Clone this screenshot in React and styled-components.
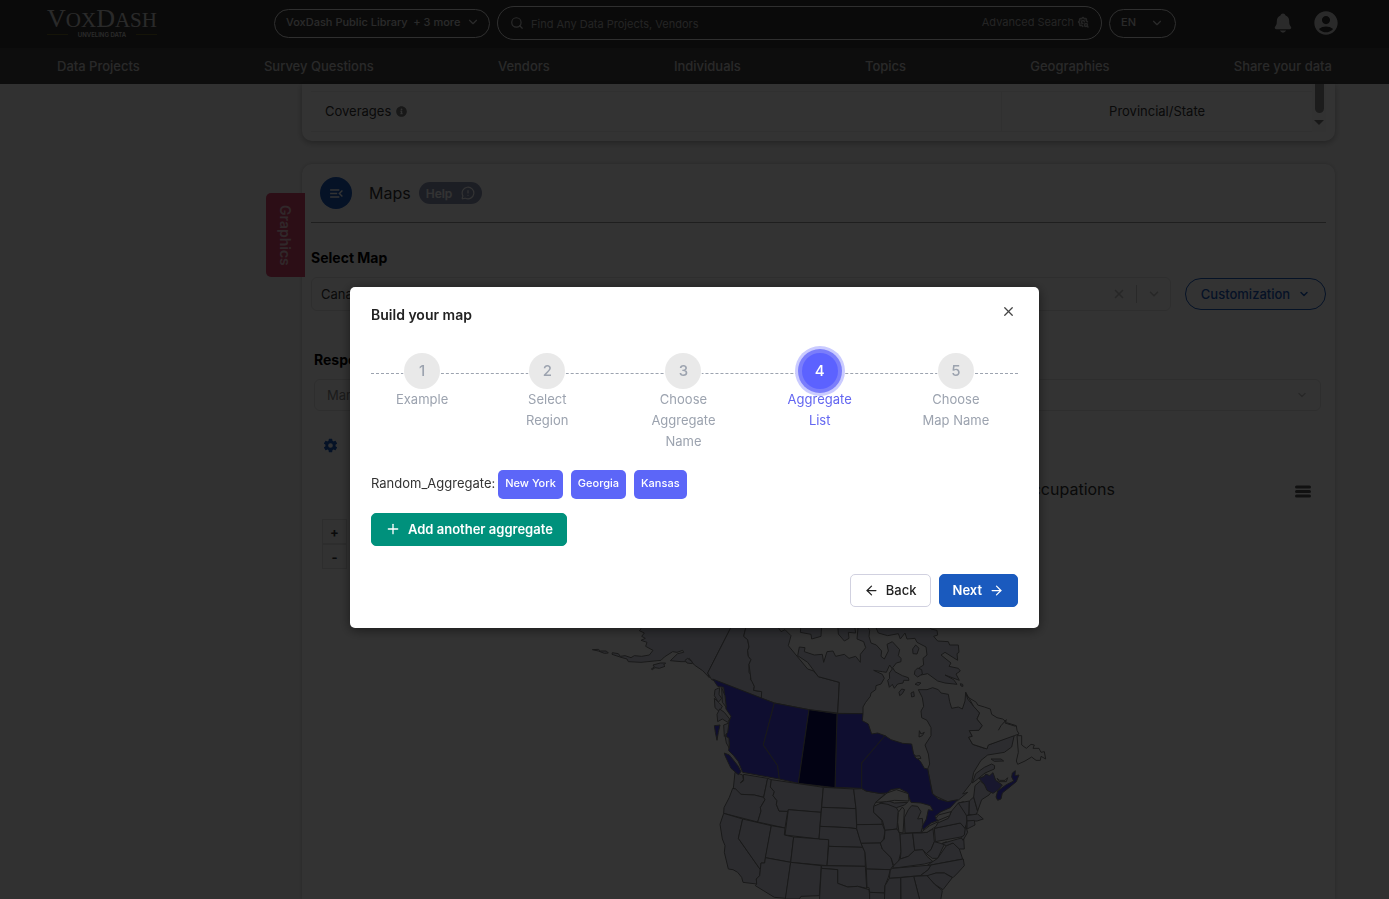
import styled, { createGlobalStyle } from "styled-components";
import { IoNotifications, IoSettingsSharp } from "react-icons/io5";
import { MdAccountCircle, MdMenuOpen } from "react-icons/md";
import { TbSettingsSearch } from "react-icons/tb";
import { FaInfoCircle } from "react-icons/fa";
import {
  ArrowLeft,
  ArrowRight,
  ChevronDown,
  MessageCircleWarning,
  Plus,
  Search,
  X,
} from "lucide-react";

const GlobalStyle = createGlobalStyle`
  * {
    box-sizing: border-box;
  }
  body {
    margin: 0;
    font-family: "Inter", "Liberation Sans", sans-serif;
    font-size: 13px;
    color: #333333;
  }
  h1, h2, h3, p, ol {
    margin: 0;
    padding: 0;
  }
  button, input, select {
    font: inherit;
    color: inherit;
  }
  button {
    cursor: pointer;
  }
`;

const Page = styled.div`
  height: 100vh;
  overflow: hidden;
  display: flex;
  flex-direction: column;
  background: #f5f5f5;
`;

const TopBar = styled.header`
  height: 48px;
  flex-shrink: 0;
  display: flex;
  align-items: center;
  padding: 0 49px 2px 47px;
  background: #323232;
  color: #d2d2d2;
`;

const Logo = styled.a`
  width: 110px;
  margin-right: 117px;
  text-align: center;
  text-decoration: none;
  color: #d2d2d2;
  .name {
    display: block;
    font-family: "Liberation Serif", serif;
    font-size: 21px;
    line-height: 21px;
    white-space: nowrap;
  }
  .name b {
    font-weight: 400;
    font-size: 26px;
  }
  .tagline {
    display: flex;
    align-items: center;
    justify-content: space-between;
    font-size: 6px;
    line-height: 8px;
    font-weight: 600;
    white-space: nowrap;
  }
  .tagline::before,
  .tagline::after {
    content: "";
    width: 21px;
    height: 1px;
    background: #6b6428;
  }
`;

const Pill = styled.button`
  width: 216px;
  height: 29px;
  display: flex;
  align-items: center;
  justify-content: space-between;
  padding: 0 9px 2px 11px;
  border: 1px solid #ebebeb;
  border-radius: 15px;
  background: none;
  font-size: 11px;
  font-weight: 500;
`;

const SearchBox = styled.div`
  flex: 1;
  height: 34px;
  margin: 0 7px;
  display: flex;
  align-items: center;
  gap: 7px;
  padding: 0 12px;
  border: 1px solid #ebebeb;
  border-radius: 17px;
  input {
    flex: 1;
    min-width: 0;
    border: 0;
    padding: 2px 0 0;
    background: none;
    font-size: 11px;
    outline: none;
  }
  input::placeholder {
    color: #b4b4b4;
  }
  a {
    display: flex;
    align-items: center;
    gap: 3px;
    font-size: 11px;
    color: #b4b4b4;
    text-decoration: none;
    padding-bottom: 3px;
  }
  a svg {
    stroke-width: 3;
  }
`;

const Language = styled.label`
  width: 67px;
  height: 29px;
  display: flex;
  align-items: center;
  padding: 0 11px;
  border: 1px solid #ebebeb;
  border-radius: 15px;
  font-size: 11px;
  font-weight: 500;
  select {
    appearance: none;
    flex: 1;
    min-width: 0;
    border: 0;
    padding: 0 0 2px;
    background: none;
  }
`;

const Account = styled.div`
  margin-left: 96px;
  display: flex;
  align-items: center;
  gap: 18px;
  button {
    display: flex;
    padding: 0;
    border: 0;
    background: none;
    color: #d2d2d2;
  }
`;

const Nav = styled.nav`
  height: 36px;
  flex-shrink: 0;
  display: flex;
  align-items: center;
  justify-content: space-between;
  padding: 0 57px;
  background: #414141;
  a {
    font-weight: 500;
    color: #cdcdcd;
    text-decoration: none;
  }
`;

const Content = styled.main`
  flex: 1;
  min-height: 0;
  display: flex;
  flex-direction: column;
  padding: 0 54px 0 266px;
`;

const CoverageCard = styled.section`
  display: flex;
  flex-shrink: 0;
  margin: 0 0 23px 36px;
  padding: 0 9px 9px;
  background: #ffffff;
  border-radius: 0 0 10px 10px;
  box-shadow: 0 2px 6px rgba(0, 0, 0, 0.3);
`;

const CoverageTable = styled.table`
  flex: 1;
  margin-top: 7px;
  border-collapse: collapse;
  th,
  td {
    height: 40px;
    padding: 0 0 2px;
    font-weight: 400;
    border-top: 1px solid #f0f0f0;
    border-bottom: 1px solid #f0f0f0;
  }
  th {
    width: 69%;
    padding-left: 14px;
    text-align: left;
  }
  th svg {
    margin-left: 1px;
    vertical-align: -1px;
    color: #777777;
  }
  td {
    border-left: 1px solid #f0f0f0;
    text-align: center;
  }
`;

const ScrollBar = styled.div`
  width: 14px;
  display: flex;
  flex-direction: column;
  align-items: center;
  gap: 7px;
  background: #fafafa;
  &::before {
    content: "";
    width: 9px;
    height: 29px;
    border-radius: 0 0 5px 5px;
    background: #8b8b8b;
  }
  &::after {
    content: "";
    border: 5px solid transparent;
    border-top-color: #777777;
    border-bottom: 0;
  }
`;

const MapArea = styled.div`
  flex: 1;
  display: flex;
  align-items: flex-start;
`;

const GraphicsTab = styled.button`
  width: 39px;
  height: 84px;
  margin: 29px -3px 0 0;
  padding: 0;
  position: relative;
  border: 0;
  border-radius: 5px 0 0 5px;
  background: #dc4670;
  color: #f0c8d2;
  font-size: 14px;
  font-weight: 600;
  writing-mode: vertical-rl;
`;

const MapCard = styled.section`
  flex: 1;
  min-width: 0;
  align-self: stretch;
  padding: 13px 9px 0;
  background: #ffffff;
  border-radius: 10px 10px 0 0;
  box-shadow: 0 0 4px rgba(0, 0, 0, 0.2);
`;

const MapHeader = styled.div`
  height: 46px;
  display: flex;
  align-items: flex-start;
  margin-bottom: 25px;
  padding-left: 9px;
  border-bottom: 1px solid #999999;
  h2 {
    margin: 0 8px 0 17px;
    font-size: 16px;
    line-height: 32px;
    font-weight: 400;
  }
`;

const MenuButton = styled.button`
  width: 32px;
  height: 32px;
  display: flex;
  align-items: center;
  justify-content: center;
  padding: 0;
  border: 0;
  border-radius: 50%;
  background: #1a5abe;
  color: #ffffff;
`;

const HelpButton = styled.button`
  height: 22px;
  margin-top: 5px;
  display: flex;
  align-items: center;
  gap: 9px;
  padding: 0 7px;
  border: 0;
  border-radius: 11px;
  background: #8c96b4;
  color: #ffffff;
  font-size: 12px;
  font-weight: 600;
`;

const FieldLabel = styled.label`
  display: block;
  font-size: 14px;
  line-height: 20px;
  font-weight: 700;
  color: #000000;
`;

const SelectRow = styled.div`
  display: flex;
  align-items: center;
  gap: 14px;
  margin-top: 9px;
`;

const SelectBox = styled.div`
  flex: 1;
  height: ${(props) => props.$height}px;
  display: flex;
  align-items: center;
  gap: 10px;
  padding: 0 ${(props) => props.$pad}px;
  border: 1px solid #e4e4e4;
  border-radius: 6px;
  color: ${(props) => (props.$muted ? "#888888" : "#333333")};
  select {
    appearance: none;
    flex: 1;
    min-width: 0;
    padding: 0;
    border: 0;
    background: none;
    opacity: 1;
  }
  button {
    display: flex;
    padding: 0;
    border: 0;
    background: none;
  }
  svg {
    color: #c4c4c4;
    stroke-width: 3;
  }
  .divider {
    width: 1px;
    height: 18px;
    background: #cccccc;
  }
`;

const CustomButton = styled.button`
  width: 141px;
  height: 32px;
  display: flex;
  align-items: center;
  justify-content: center;
  gap: 8px;
  border: 1px solid #1a5abe;
  border-radius: 16px;
  background: none;
  color: #1a5abe;
  font-weight: 500;
  svg {
    stroke-width: 3;
  }
`;

const Respondents = styled.div`
  margin-top: 39px;
  padding: 0 5px 0 3px;
`;

const SettingsButton = styled.button`
  display: flex;
  margin: 27px 0 0 12px;
  padding: 0;
  border: 0;
  background: none;
  color: #1a5abe;
`;

const ChartHeader = styled.div`
  display: flex;
  align-items: center;
  justify-content: flex-end;
  gap: 180px;
  margin: 24px 15px 0 0;
  h3 {
    font-size: 16px;
    line-height: 24px;
    font-weight: 400;
  }
  button {
    display: flex;
    padding: 5px 0 0;
    border: 0;
    background: none;
  }
`;

const ChartBody = styled.div`
  display: flex;
  align-items: flex-start;
  padding: 18px 11px 0;
`;

const ZoomButtons = styled.div`
  width: 25px;
  margin-right: -25px;
  display: flex;
  flex-direction: column;
  button {
    height: 25px;
    padding: 0;
    border: 1px solid #dedede;
    background: #f7f7f7;
    font-weight: 700;
  }
`;

const MapDrawing = styled.svg`
  width: 500px;
  height: 280px;
  margin: 100px auto 0;
  path {
    fill: #d9dbea;
    stroke: #7d7d7d;
    stroke-width: 3;
    stroke-linejoin: round;
  }
  .mid path {
    fill: #4a48f0;
  }
  .light path {
    fill: #7876e6;
  }
  .dark path {
    fill: #0a0a5f;
  }
  .empty path {
    fill: #ffffff;
  }
`;

const Overlay = styled.div`
  position: fixed;
  inset: 0;
  display: flex;
  align-items: center;
  justify-content: center;
  padding-top: 16px;
  background: rgba(0, 0, 0, 0.8);
`;

const Modal = styled.div`
  width: 689px;
  max-width: 100%;
  padding: 17px 21px 21px;
  border-radius: 5px;
  background: #ffffff;
  box-shadow: 0 2px 12px rgba(0, 0, 0, 0.5);
`;

const ModalHeader = styled.div`
  display: flex;
  align-items: flex-start;
  justify-content: space-between;
  h2 {
    font-size: 14px;
    line-height: 22px;
    font-weight: 600;
    color: #222222;
  }
  button {
    display: flex;
    padding: 0;
    margin-right: 2px;
    border: 0;
    background: none;
    color: #444444;
  }
`;

const Steps = styled.ol`
  position: relative;
  display: grid;
  grid-template-columns: 102fr 148fr 124fr 148fr 124fr;
  margin: 27px 0 18px;
  list-style: none;
  &::before {
    content: "";
    position: absolute;
    top: 20px;
    left: 0;
    right: 0;
    border-top: 1px dashed #9ca3af;
  }
`;

const Step = styled.li`
  position: relative;
  display: flex;
  flex-direction: column;
  align-items: center;
  color: ${(props) => (props.$active ? "#6366f1" : "#9ca3af")};
  .circle {
    width: 36px;
    height: 36px;
    border-radius: 50%;
    text-align: center;
    font-size: 15px;
    line-height: 36px;
    font-weight: 500;
    background: ${(props) => (props.$active ? "#5c62ff" : "#e9e9e9")};
    color: ${(props) => (props.$active ? "#ffffff" : "#9ca3af")};
    box-shadow: ${(props) =>
      props.$active
        ? "0 0 0 4px #7a7dfb, 0 0 0 7px #cacbff"
        : "0 0 0 1px #ffffff"};
  }
  .label {
    position: relative;
    max-width: 72px;
    line-height: 21px;
    text-align: center;
  }
`;

const AggregateRow = styled.div`
  display: flex;
  align-items: flex-start;
  gap: 8px;
  margin-bottom: 14px;
  p {
    margin-right: -5px;
    line-height: 27px;
  }
`;

const Tag = styled.span`
  height: 29px;
  padding: 0 7px;
  border-radius: 5px;
  background: #5c66f8;
  color: #ffffff;
  font-size: 11px;
  line-height: 27px;
  font-weight: 500;
`;

const Button = styled.button`
  height: 33px;
  display: flex;
  align-items: center;
  gap: 7px;
  padding: 0 13px 1px;
  border: 1px solid ${(props) => props.$border || props.$color};
  border-radius: 5px;
  background: ${(props) => props.$color};
  color: ${(props) => props.$text || "#ffffff"};
  font-weight: ${(props) => props.$weight || 600};
`;

const ModalFooter = styled.div`
  display: flex;
  justify-content: flex-end;
  gap: 8px;
  margin-top: 28px;
`;

const links = [
  "Data Projects",
  "Survey Questions",
  "Vendors",
  "Individuals",
  "Topics",
  "Geographies",
  "Share your data",
];

const steps = [
  "Example",
  "Select Region",
  "Choose Aggregate Name",
  "Aggregate List",
  "Choose Map Name",
];

const tags = ["New York", "Georgia", "Kansas"];

const westRegions = [
  // Alaska and its islands
  "M178 15L180 30L175 35L190 42L182 52L193 58L180 64L198 70L194 82L216 94L205 108L182 112L160 110L150 116L132 110L118 112L112 104L94 101L93 106L120 115L138 120L142 128L180 130L240 124L250 114L275 98L288 100L305 94L308 100L290 104L268 125L300 128L314 128L325 118L340 138L365 155L385 176L380 162L455 15Z",
  "M34 92L52 91L58 96L76 96L82 102L70 103L52 96Z",
  "M211 150L220 144L216 138L238 132L254 132L248 138L252 142L235 148L222 146L214 152Z",
  "M312 124L320 118L333 128L334 134L318 132Z",
  // Yukon, Northwest Territories
  "M455 15L380 162L392 182L541 238L542 218L518 214L520 202L514 185L508 182L510 168L504 160L504 136L510 122L502 112L500 94L504 84L500 62L488 52L497 15Z",
  "M497 15L488 52L500 62L504 84L500 94L502 112L510 122L504 136L510 182L520 202L518 214L542 218L541 238L580 252L684 272L770 282L775 190L712 173L698 156L680 150L622 80L630 50L612 32L600 38L585 15Z",
  // western states
  "M462 460L485 468L487 482L478 492L488 485L487 466L560 478L548 535L520 528L480 526L468 520L464 510L457 508Z",
  "M464 510L480 526L520 528L548 535L552 542L538 566L540 576L530 609L428 583L429 566L445 535L455 508Z",
  "M428 583L485 600L472 658L538 752L536 770L526 780L527 795L486 790L482 775L470 760L456 752L442 750L430 700L432 680L424 660L417 616Z",
  "M485 600L571 620L551 732L540 732L538 752L472 658Z",
  "M560 478L571 482L568 504L580 518L576 530L588 545L586 556L594 576L620 577L612 627L530 609L540 576L538 566L552 542L548 535Z",
  "M571 482L727 505L720 580L622 572L620 577L594 576L586 556L588 545L576 530L580 518L568 504Z",
  "M622 572L720 580L714 660L612 648Z",
  "M571 620L612 627L610 648L638 654L629 730L553 716Z",
  "M638 654L743 662L738 740L629 730Z",
  "M553 716L629 730L614 838L580 835L523 800L527 795L526 780L536 770L538 752L540 732L551 732Z",
  "M629 730L721 740L715 830L660 832L655 840L613 840Z",
  "M727 505L818 510L825 569L722 565Z",
  "M722 565L825 569L827 629L800 626L717 622Z",
  "M717 622L800 626L827 629L835 655L845 685L743 682L743 662L714 660Z",
  "M743 682L845 685L852 698L853 742L738 740Z",
  "M721 740L853 742L857 808L830 802L800 804L770 793L770 752L721 748Z",
  "M721 748L770 752L770 793L800 804L830 802L864 812L868 850L715 850Z",
];

const eastRegions = [
  // Nunavut and the arctic islands
  "M-70 110L-40 130L-8 173L55 190L50 283L126 284L126 264L134 250L148 232L150 222L164 212L165 200L180 195L190 178L184 166L158 154L184 158L196 160L206 138L214 150L205 162L206 178L200 184L205 205L214 196L220 208L230 195L246 192L248 184L264 184L262 176L244 170L222 158L215 146L226 132L240 128L240 118L232 110L236 92L214 68L198 76L202 96L190 120L180 112L182 96L166 78L150 72L144 52L146 34L134 15L112 15L108 60L128 68L134 86L118 106L118 130L104 112L84 118L70 106L44 112L36 96L18 98L8 130L4 106L-20 108L-50 98L-48 86L-65 84Z",
  "M-60 15L-62 40L-30 46L-28 60L0 52L2 15Z",
  "M50 15L52 45L70 66L84 58L82 40L104 42L100 15Z",
  "M160 15L172 42L200 50L232 44L238 60L252 42L258 60L282 58L288 70L315 84L318 108L306 118L308 138L295 146L300 168L320 164L350 186L372 192L408 196L398 182L372 168L415 184L405 165L418 156L412 148L384 142L390 132L360 108L372 100L410 124L408 104L414 100L412 78L386 78L382 68L350 66L338 52L350 48L348 34L330 30L320 15Z",
  "M275 90L284 78L294 88L288 105L276 104Z",
  "M282 155L290 147L302 152L304 165L290 174L280 166Z",
  "M234 220L242 210L251 212L244 224L236 230Z",
  "M270 222L278 218L280 232L272 234Z",
  "M282 196L290 190L300 192L292 199Z",
  "M418 194L425 196L426 202L420 201Z",
  // Quebec
  "M292 212L318 212L335 206L352 212L360 222L382 226L386 248L392 268L412 264L424 270L432 246L434 220L440 240L458 262L476 282L468 300L484 320L474 334L445 335L454 352L443 355L455 376L490 388L502 378L580 348L572 384L550 400L500 408L480 424L458 460L452 490L425 525L440 520L410 545L380 548L345 532L335 524L320 450L326 435L322 405L312 378L330 350L330 326L318 304L302 296L300 276L308 262L304 236Z",
  "M454 492L464 464L490 445L512 435L521 440L520 450L492 462L470 480Z",
  "M510 420L540 420L548 426L520 427Z",
  // great lakes and the south
  "M98 510L122 509L135 516L175 523L192 525L164 550L158 562L158 580L182 604L184 616L107 617L105 569Z",
  "M107 617L184 616L192 636L188 660L178 672L120 673L107 629Z",
  "M120 673L178 672L184 690L210 716L216 740L208 752L136 750L132 700Z",
  "M136 750L208 752L202 775L192 800L190 822L146 820L144 806L138 806Z",
  "M146 820L190 822L192 850L146 850Z",
  "M158 562L190 548L200 556L222 560L232 576L230 600L228 630L192 634L184 604L158 580Z",
  "M192 634L228 630L237 645L240 698L232 730L218 740L210 716L184 690L178 672L190 660Z",
  "M237 645L275 642L281 694L262 712L238 720L240 698Z",
  "M275 642L300 642L318 640L336 630L340 668L330 692L316 704L305 692L281 694Z",
  "M252 642L250 596L262 572L272 560L290 562L300 578L290 600L304 598L306 618L300 640Z",
  "M176 552L200 545L220 552L260 550L250 558L226 566L200 556Z",
  "M218 740L238 720L262 712L281 694L305 692L318 712L336 728L310 735L215 748Z",
  "M208 752L215 748L330 738L322 752L298 770L205 778Z",
  "M316 704L330 692L340 668L362 674L376 668L366 684L350 718L334 718Z",
  "M320 738L350 718L376 680L396 672L415 690L425 720L330 738Z",
  "M298 770L322 752L330 738L427 720L430 740L410 762L396 776L370 762L345 762L318 772Z",
  "M318 770L345 762L370 762L394 776L366 812L340 795Z",
  "M278 772L318 770L340 795L364 815L358 850L298 850Z",
  "M239 776L278 772L298 850L240 850Z",
  "M205 778L239 776L239 850L190 850L192 800Z",
  // north east
  "M340 628L418 612L434 630L430 652L343 668Z",
  "M340 628L350 612L382 598L392 576L412 552L428 548L438 600L434 630L418 612Z",
  "M362 674L410 660L428 656L430 690L415 690L396 672L376 680Z",
  "M434 620L440 640L426 664L420 655L430 648Z",
  "M412 552L445 546L444 586L437 590Z",
  "M445 546L458 534L470 578L462 590L444 586Z",
  "M437 590L470 585L487 600L468 606L438 606Z",
  "M438 606L460 604L462 618L438 630Z",
  "M458 534L462 500L478 486L494 500L510 520L504 528L482 542L470 576Z",
];

const blueRegions = [
  "M48 284L126 284L124 305L142 315L152 345L170 342L192 350L122 432L122 508L42 505Z",
  "M192 350L210 362L245 373L272 375L278 405L300 430L310 448L320 450L334 524L352 540L380 548L410 542L388 566L360 578L342 592L352 604L330 612L306 632L304 622L316 600L322 572L336 575L328 560L300 552L270 550L258 520L235 508L210 512L198 522L175 523L135 516L122 508L122 432Z",
  "M574 462L583 455L582 470L594 468L586 488L564 506L544 522L540 540L530 544L525 534L530 516L556 497L578 486L572 474Z",
  "M-325 180L-140 252L-173 378L-130 440L-125 480L-235 460L-248 428L-262 410L-277 395L-275 370L-284 355L-282 325L-270 292L-285 270L-292 205L-310 202Z",
  "M-140 252L-36 272L-68 493L-125 480L-130 440L-173 378Z",
  "M-290 402L-275 408L-262 424L-248 442L-240 458L-248 467L-270 448L-288 410Z",
  "M-320 320L-303 318L-308 340L-312 364L-317 340Z",
];

const coastIslands = [
  "M-318 212L-304 206L-306 226L-298 238L-308 250L-320 230Z",
  "M-320 238L-305 252L-296 262L-305 278L-318 266Z",
  "M-298 206L-288 230L-284 265L-296 250Z",
  "M-304 270L-290 280L-274 300L-280 310L-296 300L-310 308L-312 286Z",
  "M-292 318L-276 312L-280 340L-290 352Z",
  "M-288 350L-276 358L-275 388L-284 372Z",
];

const emptyRegions = [
  "M434 220L440 234L466 250L470 258L490 264L508 270L512 286L528 296L545 300L560 312L586 320L588 334L594 345L580 350L502 378L498 390L480 384L455 376L443 355L454 352L445 335L474 334L484 320L468 300L476 282L458 262Z",
  "M588 350L602 350L602 378L616 388L630 376L640 378L636 388L654 388L660 400L670 398L674 420L660 412L658 424L645 424L632 414L612 426L590 436L586 426L592 400Z",
  "M532 334L540 320L556 302L552 312L584 322",
  "M295 335L300 345L310 340L304 350L294 354Z",
  "M280 412L296 410L300 418L288 420Z",
  "M232 580L244 564L250 572L248 612L246 642L234 640L230 610Z",
  "M164 550L198 522L226 512L262 524L264 546L220 544L196 548Z",
  "M300 640L326 620L352 608L345 622L318 640Z",
  "M344 600L352 588L390 578L386 590L352 604Z",
  "M528 478L536 484L552 484L560 476L556 488L534 488Z",
];

const Shapes = ({ paths }) => paths.map((d) => <path key={d} d={d} />);

const RegionMap = () => (
  <MapDrawing viewBox="-36 0 1500 840" role="img" aria-label="Map of Canada">
    <Shapes paths={westRegions} />
    <g transform="translate(720 0)">
      <Shapes paths={eastRegions} />
      <g className="mid">
        <Shapes paths={blueRegions} />
      </g>
      <Shapes paths={coastIslands} />
      <g className="light">
        <path d="M474 478L490 472L494 465L506 470L516 461L524 484L544 498L532 512L516 523L498 514L490 496Z" />
      </g>
      <g className="dark">
        <path d="M-36 272L48 284L42 506L-68 493Z" />
      </g>
      <g className="empty">
        <Shapes paths={emptyRegions} />
      </g>
    </g>
  </MapDrawing>
);

const BuildMapModal = () => (
  <Overlay>
    <Modal role="dialog" aria-modal="true" aria-labelledby="modal-title">
      <ModalHeader>
        <h2 id="modal-title">Build your map</h2>
        <button aria-label="Close">
          <X size={15} strokeWidth={2} />
        </button>
      </ModalHeader>
      <Steps>
        {steps.map((step, i) => (
          <Step key={step} $active={i === 3}>
            <span className="circle">{i + 1}</span>
            <span className="label">{step}</span>
          </Step>
        ))}
      </Steps>
      <AggregateRow>
        <p>Random_Aggregate:</p>
        {tags.map((tag) => (
          <Tag key={tag}>{tag}</Tag>
        ))}
      </AggregateRow>
      <Button $color="#00917c">
        <Plus size={16} strokeWidth={2} />
        Add another aggregate
      </Button>
      <ModalFooter>
        <Button $color="#ffffff" $border="#d1d1e0" $text="#222222" $weight={500}>
          <ArrowLeft size={15} />
          Back
        </Button>
        <Button $color="#1a5abe">
          Next
          <ArrowRight size={15} />
        </Button>
      </ModalFooter>
    </Modal>
  </Overlay>
);

const App = () => {
  return (
    <>
      <GlobalStyle />
      <Page>
        <TopBar>
          <Logo href="#">
            <span className="name">
              <b>V</b>OX<b>D</b>ASH
            </span>
            <span className="tagline">UNVELING DATA</span>
          </Logo>
          <Pill>
            <span>VoxDash Public Library</span>
            <span>+ 3 more</span>
            <ChevronDown size={14} />
          </Pill>
          <SearchBox>
            <Search size={14} />
            <input
              aria-label="Search"
              placeholder="Find Any Data Projects, Vendors"
            />
            <a href="#">
              Advanced Search <TbSettingsSearch size={12} />
            </a>
          </SearchBox>
          <Language>
            <select aria-label="Language">
              <option>EN</option>
            </select>
            <ChevronDown size={14} />
          </Language>
          <Account>
            <button aria-label="Notifications">
              <IoNotifications size={22} />
            </button>
            <button aria-label="Account">
              <MdAccountCircle size={28} />
            </button>
          </Account>
        </TopBar>
        <Nav>
          {links.map((link) => (
            <a key={link} href="#">
              {link}
            </a>
          ))}
        </Nav>
        <Content>
          <CoverageCard>
            <CoverageTable>
              <tbody>
                <tr>
                  <th scope="row">
                    Coverages <FaInfoCircle size={11} />
                  </th>
                  <td>Provincial/State</td>
                </tr>
              </tbody>
            </CoverageTable>
            <ScrollBar />
          </CoverageCard>
          <MapArea>
            <GraphicsTab>Graphics</GraphicsTab>
            <MapCard>
              <MapHeader>
                <MenuButton aria-label="Toggle menu">
                  <MdMenuOpen size={17} />
                </MenuButton>
                <h2>Maps</h2>
                <HelpButton>
                  Help
                  <MessageCircleWarning size={14} />
                </HelpButton>
              </MapHeader>
              <FieldLabel htmlFor="map">Select Map</FieldLabel>
              <SelectRow>
                <SelectBox $height={34} $pad={9}>
                  <select id="map">
                    <option>Canada and United States</option>
                  </select>
                  <button aria-label="Clear">
                    <X size={14} />
                  </button>
                  <span className="divider" />
                  <ChevronDown size={14} />
                </SelectBox>
                <CustomButton>
                  Customization
                  <ChevronDown size={12} />
                </CustomButton>
              </SelectRow>
              <Respondents>
                <FieldLabel htmlFor="respondents">Respondents</FieldLabel>
                <SelectRow>
                  <SelectBox $height={32} $pad={12} $muted>
                    <select id="respondents">
                      <option>Management Occupations</option>
                    </select>
                    <ChevronDown size={12} />
                  </SelectBox>
                </SelectRow>
              </Respondents>
              <SettingsButton aria-label="Map settings">
                <IoSettingsSharp size={15} />
              </SettingsButton>
              <ChartHeader>
                <h3>Management Occupations</h3>
                <button aria-label="Chart menu">
                  <svg width="16" height="13" viewBox="0 0 16 13">
                    <path
                      d="M1.5 2h13M1.5 6.5h13M1.5 11h13"
                      stroke="#555555"
                      strokeWidth="3"
                      strokeLinecap="round"
                    />
                  </svg>
                </button>
              </ChartHeader>
              <ChartBody>
                <ZoomButtons>
                  <button>+</button>
                  <button>-</button>
                </ZoomButtons>
                <RegionMap />
              </ChartBody>
            </MapCard>
          </MapArea>
        </Content>
      </Page>
      <BuildMapModal />
    </>
  );
};

export default App;
